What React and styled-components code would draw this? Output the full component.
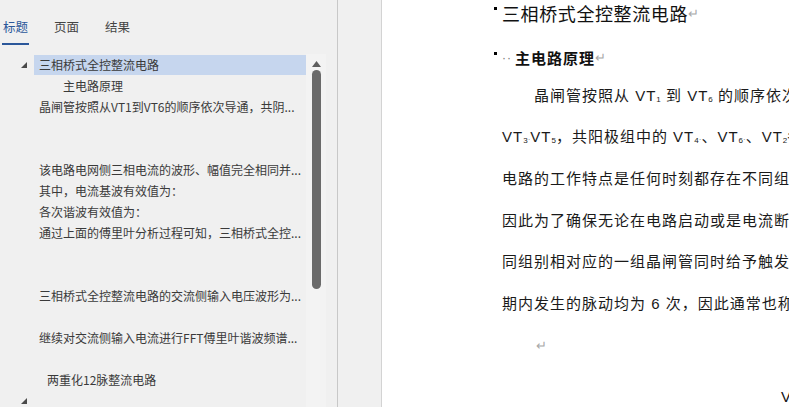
import React from 'react'
import styled, { createGlobalStyle } from 'styled-components'

const GlobalStyle = createGlobalStyle`
  html, body {
    margin: 0;
    padding: 0;
    background: #f0f0f0;
  }
  body {
    font-family: "Noto Sans CJK SC", "Liberation Sans", sans-serif;
  }
`

const Frame = styled.div`
  display: flex;
  width: 789px;
  height: 407px;
  overflow: hidden;
`

// 左侧导航窗格
const NavPane = styled.div`
  width: 337px;
  flex: none;
  display: flex;
  flex-direction: column;
  background: #f0f0f0;
  border-right: 1px solid #c8c8c8;
`

const TabBar = styled.div`
  display: flex;
  gap: 24px;
  padding: 18px 0 0 2px;
`

const Tab = styled.div`
  font-size: 12.5px;
  line-height: 18px;
  padding: 0 1px 7px;
  color: ${p => (p.active ? '#2b579a' : '#444')};
  border-bottom: 2px solid ${p => (p.active ? '#2b579a' : 'transparent')};
`

const NavBody = styled.div`
  flex: 1;
  display: flex;
  margin-top: 9px;
  min-height: 0;
`

const Tree = styled.div`
  width: 306px;
  display: flex;
  flex-direction: column;
`

const Row = styled.div`
  display: flex;
  height: 21px;
  align-items: stretch;
  flex: none;
`

const Twisty = styled.div`
  width: 34px;
  flex: none;
  display: flex;
  align-items: center;
  justify-content: flex-end;
  padding-right: 7px;
  box-sizing: border-box;
`

const Label = styled.div`
  flex: 1;
  margin: 1px 0 0;
  height: 20px;
  line-height: 20px;
  padding-left: ${p => 5 + (p.indent || 0)}px;
  font-size: 12px;
  color: #3a3a3a;
  white-space: nowrap;
  overflow: hidden;
  background: ${p => (p.selected ? '#c6d6ee' : 'transparent')};
`

const ScrollCol = styled.div`
  width: 20px;
  flex: none;
  display: flex;
  flex-direction: column;
  align-items: center;
  background: #f3f3f3;
  padding-top: 7px;
  box-sizing: border-box;
`

const Thumb = styled.div`
  width: 9px;
  height: 219px;
  margin-top: 3px;
  border-radius: 5px;
  background: #6a6a6a;
`

// 文档区域
const Gutter = styled.div`
  width: 43px;
  flex: none;
  background: #f0f0f0;
  border-right: 1px solid #d3d3d3;
`

const Page = styled.div`
  flex: 1;
  background: #fff;
  overflow: hidden;
  padding-left: 120px;
  display: flex;
  flex-direction: column;
  font-family: "Liberation Sans", "Noto Sans CJK SC", sans-serif;
  color: #1e1e1e;
`

const Para = styled.div`
  display: flex;
  align-items: center;
  white-space: nowrap;
  height: ${p => p.h}px;
  margin-top: ${p => p.mt || 0}px;
  font-size: ${p => p.size}px;
  font-weight: ${p => (p.bold ? 700 : 400)};
  letter-spacing: ${p => p.ls || 0}px;
  color: #111;
`

const Bullet = styled.span`
  width: 3px;
  height: 3px;
  background: #000;
  margin-left: -8px;
  margin-right: 5px;
  align-self: flex-start;
  margin-top: ${p => p.top}px;
  flex: none;
`

const Mark = styled.span`
  color: #a8a8a8;
  font-weight: 400;
  font-size: 13px;
  letter-spacing: 0;
`

const Dots = styled.span`
  color: #777;
  font-weight: 400;
  font-size: 12px;
  letter-spacing: 1px;
  margin-right: 3px;
`

const Body = styled.div`
  font-size: 15px;
  letter-spacing: 1px;
  margin-top: 4px;
  white-space: nowrap;
  color: #1a1a1a;
`

const Line = styled.div`
  height: 41.6px;
  line-height: 41.6px;
  overflow: visible;
  padding-left: ${p => p.indent || 0}px;
  sub {
    font-size: 8px;
    line-height: 0;
    vertical-align: -1px;
    letter-spacing: 0;
  }
`

const Tick = styled.span`
  font-size: 8px;
  line-height: 0;
  color: #777;
  letter-spacing: 0;
`

const Tail = styled.div`
  padding-left: 279px;
  margin-top: 21px;
  font-size: 15px;
  line-height: 20px;
  color: #111;
`

const Arrow = () => (
  <svg width="6" height="6" viewBox="0 0 6 6">
    <path d="M6 0 L6 6 L0 6 Z" fill="#4a4a4a" />
  </svg>
)

const UpArrow = () => (
  <svg width="9" height="6" viewBox="0 0 9 6">
    <path d="M4.5 0 L9 6 L0 6 Z" fill="#5e5e5e" />
  </svg>
)

const rows = [
  { text: '三相桥式全控整流电路', arrow: true, selected: true },
  { text: '主电路原理', indent: 24 },
  { text: '晶闸管按照从VT1到VT6的顺序依次导通，共阴...' },
  { text: '' },
  { text: '' },
  { text: '该电路电网侧三相电流的波形、幅值完全相同并...' },
  { text: '其中，电流基波有效值为：' },
  { text: '各次谐波有效值为：' },
  { text: '通过上面的傅里叶分析过程可知，三相桥式全控...' },
  { text: '' },
  { text: '' },
  { text: '三相桥式全控整流电路的交流侧输入电压波形为...' },
  { text: '' },
  { text: '继续对交流侧输入电流进行FFT傅里叶谐波频谱...' },
  { text: '' },
  { text: '两重化12脉整流电路', indent: 8 },
  { text: '', arrow: true }
]

export default function App() {
  return (
    <>
      <GlobalStyle />
      <Frame>
        <NavPane>
          <TabBar>
            <Tab active>标题</Tab>
            <Tab>页面</Tab>
            <Tab>结果</Tab>
          </TabBar>
          <NavBody>
            <Tree>
              {rows.map((r, i) => (
                <Row key={i}>
                  <Twisty>{r.arrow && <Arrow />}</Twisty>
                  <Label selected={r.selected} indent={r.indent}>
                    {r.text}
                  </Label>
                </Row>
              ))}
            </Tree>
            <ScrollCol>
              <UpArrow />
              <Thumb />
            </ScrollCol>
          </NavBody>
        </NavPane>
        <Gutter />
        <Page>
          <Para h={28} size={18} ls={0.6}>
            <Bullet top={7} />
            三相桥式全控整流电路<Mark>↵</Mark>
          </Para>
          <Para h={28} mt={18} size={15} ls={1} bold>
            <Bullet top={8} />
            <Dots>··</Dots>主电路原理<Mark>↵</Mark>
          </Para>
          <Body>
            <Line indent={32}>
              晶闸管按照从 VT<sub>1</sub> 到 VT<sub>6</sub> 的顺序依次导通，共阴极组中的
            </Line>
            <Line>
              VT<sub>3</sub>
              <Tick>·</Tick>VT<sub>5</sub>，共阳极组中的 VT<sub>4</sub>
              <Tick>·</Tick>、VT<sub>6</sub>
              <Tick>·</Tick>、VT<sub>2</sub>各自轮流导通。
            </Line>
            <Line>电路的工作特点是任何时刻都存在不同组的两个晶闸管同时导通，</Line>
            <Line>因此为了确保无论在电路启动或是电流断续时都能正常工作，</Line>
            <Line>同组别相对应的一组晶闸管同时给予触发脉冲。</Line>
            <Line>期内发生的脉动均为 6 次，因此通常也称为六脉波整流电路。</Line>
            <Line indent={34}>
              <Mark>↵</Mark>
            </Line>
          </Body>
          <Tail>V</Tail>
        </Page>
      </Frame>
    </>
  )
}
